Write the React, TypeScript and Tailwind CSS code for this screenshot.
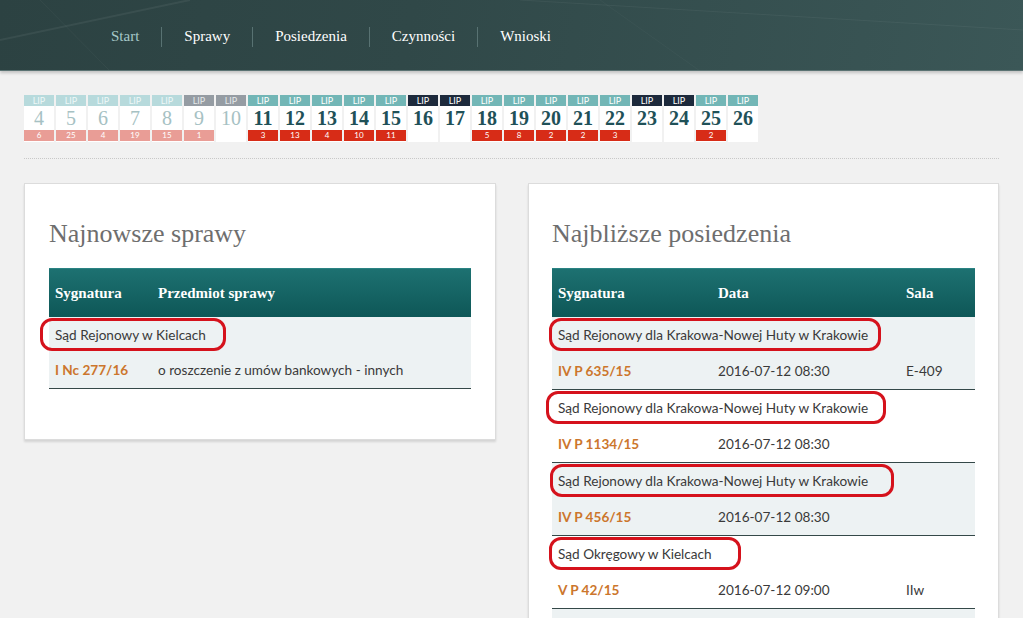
const serif = "font-['Liberation_Serif','DejaVu_Serif',serif]";
const sans = "font-['Lato','Liberation_Sans',sans-serif]";

type Day = { d: number; kind: "past" | "pastOff" | "cur" | "off"; n?: number };

const days: Day[] = [
	{ d: 4, kind: "past", n: 6 },
	{ d: 5, kind: "past", n: 25 },
	{ d: 6, kind: "past", n: 4 },
	{ d: 7, kind: "past", n: 19 },
	{ d: 8, kind: "past", n: 15 },
	{ d: 9, kind: "pastOff", n: 1 },
	{ d: 10, kind: "pastOff" },
	{ d: 11, kind: "cur", n: 3 },
	{ d: 12, kind: "cur", n: 13 },
	{ d: 13, kind: "cur", n: 4 },
	{ d: 14, kind: "cur", n: 10 },
	{ d: 15, kind: "cur", n: 11 },
	{ d: 16, kind: "off" },
	{ d: 17, kind: "off" },
	{ d: 18, kind: "cur", n: 5 },
	{ d: 19, kind: "cur", n: 8 },
	{ d: 20, kind: "cur", n: 2 },
	{ d: 21, kind: "cur", n: 2 },
	{ d: 22, kind: "cur", n: 3 },
	{ d: 23, kind: "off" },
	{ d: 24, kind: "off" },
	{ d: 25, kind: "cur", n: 2 },
	{ d: 26, kind: "cur" },
];

const labelCls = {
	past: "bg-[#b7dadc] text-[#eef8f8]",
	pastOff: "bg-[#959ca3] text-[#e4e8ea]",
	cur: "bg-[#72b6b6] text-white",
	off: "bg-[#1d2a3c] text-white",
};

function DayCell({ day }: { day: Day }) {
	const past = day.kind === "past" || day.kind === "pastOff";
	return (
		<div className="flex w-[30px] flex-col bg-white">
			<div className={`h-[11px] text-center text-[9px] leading-[11px] ${sans} ${labelCls[day.kind]}`}>LIP</div>
			<div
				className={`h-[24px] text-center text-[20px] leading-[24px] ${serif} ${
					past ? "text-[#a6c1c3]" : "font-bold text-[#1f5158]"
				}`}
			>
				{day.d}
			</div>
			<div className="h-[12px]">
				{day.n !== undefined && (
					<div
						className={`h-[11px] text-center text-[8px] leading-[11px] text-white ${sans} ${
							past ? "bg-[#e99d96]" : "bg-[#d72c17]"
						}`}
					>
						{day.n}
					</div>
				)}
			</div>
		</div>
	);
}

// red hand-drawn style ring around a court name
function Oval({ children, left = 9, right = 20 }: { children: string; left?: number; right?: number }) {
	return (
		<span className="relative inline-block">
			{children}
			<span
				className="pointer-events-none absolute -top-[7px] -bottom-[6px] rounded-[12px] border-[3px] border-[#d5121c]"
				style={{ left: -left, right: -right }}
			/>
		</span>
	);
}

function TableHead({ cols, grid }: { cols: string[]; grid: string }) {
	return (
		<div
			className={`grid h-[49px] items-center border-t border-[#2a8383] bg-[linear-gradient(#1d7171,#0e5757)] px-[6px] text-[15px] font-bold text-white ${serif} ${grid}`}
		>
			{cols.map((c) => (
				<div key={c}>{c}</div>
			))}
		</div>
	);
}

type Row = { court: string; ring?: [number, number]; sig: string; cols: string[] };

function Group({ row, grid, shaded }: { row: Row; grid: string; shaded: boolean }) {
	return (
		<div className={`border-b border-[#344848] text-[13.6px] text-[#3a3a3a] ${sans} ${shaded ? "bg-[#edf2f3]" : "bg-white"}`}>
			<div className="flex h-[36px] items-center px-[6px]">
				{row.ring ? (
					<Oval left={row.ring[0]} right={row.ring[1]}>
						{row.court}
					</Oval>
				) : (
					<span>{row.court}</span>
				)}
			</div>
			<div className={`grid h-[36px] items-center px-[6px] ${grid}`}>
				<div className="font-bold text-[#cc762c]">{row.sig}</div>
				{row.cols.map((c, i) => (
					<div key={i}>{c}</div>
				))}
			</div>
		</div>
	);
}

const meetings: Row[] = [
	{ court: "Sąd Rejonowy dla Krakowa-Nowej Huty w Krakowie", ring: [9, 13], sig: "IV P 635/15", cols: ["2016-07-12 08:30", "E-409"] },
	{ court: "Sąd Rejonowy dla Krakowa-Nowej Huty w Krakowie", ring: [12, 18], sig: "IV P 1134/15", cols: ["2016-07-12 08:30", ""] },
	{ court: "Sąd Rejonowy dla Krakowa-Nowej Huty w Krakowie", ring: [8, 26], sig: "IV P 456/15", cols: ["2016-07-12 08:30", ""] },
	{ court: "Sąd Okręgowy w Kielcach", ring: [9, 29], sig: "V P 42/15", cols: ["2016-07-12 09:00", "IIw"] },
	{ court: "Sąd Rejonowy w Kielcach", sig: "I C 100/16", cols: ["2016-07-12 09:00", ""] },
];

export default function App() {
	return (
		<div className="min-h-screen bg-[#f1f1f1]">
			<header className="relative h-[71px] overflow-hidden border-b border-[#5b7373] bg-[linear-gradient(100deg,#2c4242_0%,#304848_40%,#3b5757_100%)] shadow-[0_2px_3px_rgba(0,0,0,0.2)]">
				<svg className="absolute inset-0" width="1023" height="71">
					<line x1="0" y1="40" x2="190" y2="0" stroke="#ffffff" strokeOpacity="0.06" strokeWidth="2" />
					<line x1="40" y1="0" x2="110" y2="71" stroke="#ffffff" strokeOpacity="0.04" />
					<line x1="520" y1="0" x2="1023" y2="30" stroke="#ffffff" strokeOpacity="0.05" />
					<line x1="600" y1="0" x2="700" y2="71" stroke="#ffffff" strokeOpacity="0.03" />
				</svg>
				<nav className={`relative flex h-full items-center pt-[3px] pl-[89px] text-[15px] ${serif}`}>
					{["Start", "Sprawy", "Posiedzenia", "Czynności", "Wnioski"].map((t, i) => (
						<div key={t} className="flex items-center">
							{i > 0 && <span className="h-[20px] w-px bg-[#587272]" />}
							<span className={`px-[22px] ${i === 0 ? "text-[#a7c9c9]" : "text-white"}`}>{t}</span>
						</div>
					))}
				</nav>
			</header>

			<div className="px-[24px] pt-[24px]">
				<div className="flex gap-[2px]">
					{days.map((d) => (
						<DayCell key={d.d} day={d} />
					))}
				</div>
				<div className="mt-[16px] border-b border-dotted border-[#c8c8c8]" />

				<div className="mt-[24px] flex items-start gap-[32px]">
					<section className="w-[472px] border border-[#dcdcdc] bg-white px-[24px] pt-[34px] pb-[50px] shadow-[0_2px_2px_rgba(0,0,0,0.12)]">
						<h2 className={`mb-[18px] text-[26px] leading-[32px] text-[#6e6e6e] ${serif}`}>Najnowsze sprawy</h2>
						<TableHead cols={["Sygnatura", "Przedmiot sprawy"]} grid="grid-cols-[103px_1fr]" />
						<div className={`border-b border-[#344848] bg-[#edf2f3] text-[13.6px] text-[#3a3a3a] ${sans}`}>
							<div className="flex h-[36px] items-center px-[6px]">
								<Oval left={15} right={20}>
									Sąd Rejonowy w Kielcach
								</Oval>
							</div>
							<div className="grid h-[35px] grid-cols-[103px_1fr] items-center px-[6px]">
								<div className="font-bold text-[#cc762c]">I Nc 277/16</div>
								<div>o roszczenie z umów bankowych - innych</div>
							</div>
						</div>
					</section>

					<section className="w-[471px] border border-[#dcdcdc] bg-white px-[23px] pt-[34px] pb-[50px] shadow-[0_2px_2px_rgba(0,0,0,0.12)]">
						<h2 className={`mb-[18px] text-[26px] leading-[32px] text-[#6e6e6e] ${serif}`}>Najbliższe posiedzenia</h2>
						<TableHead cols={["Sygnatura", "Data", "Sala"]} grid="grid-cols-[160px_188px_1fr]" />
						{meetings.map((m, i) => (
							<Group key={i} row={m} grid="grid-cols-[160px_188px_1fr]" shaded={i % 2 === 0} />
						))}
					</section>
				</div>
			</div>
		</div>
	);
}
